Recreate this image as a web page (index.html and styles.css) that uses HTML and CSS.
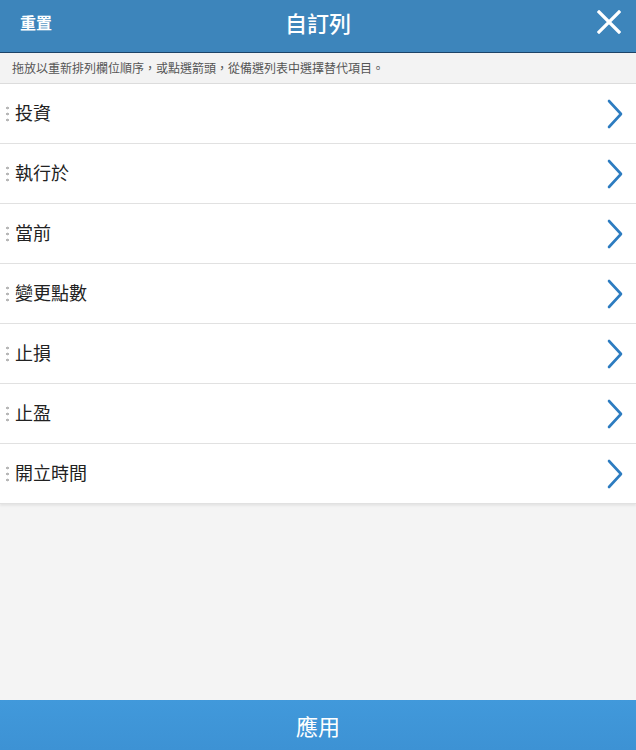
FILE: index.html
```html
<!DOCTYPE html>
<html lang="zh-Hant">
<head>
<meta charset="utf-8">
<title>自訂列</title>
<link rel="stylesheet" href="styles.css">
</head>
<body>
<div class="app">
  <header class="topbar">
    <span class="reset">重置</span>
    <h1 class="title">自訂列</h1>
    <svg class="close" width="24" height="24" viewBox="0 0 24 24" aria-label="關閉">
      <path d="M2 2 L22 22 M22 2 L2 22" stroke="#fff" stroke-width="3.2" stroke-linecap="square" fill="none"/>
    </svg>
  </header>
  <div class="hint">拖放以重新排列欄位順序，或點選箭頭，從備選列表中選擇替代項目。</div>
  <ul class="list">
    <li class="row"><span class="grip"></span><span class="label">投資</span><svg class="chev" viewBox="0 0 18 30"><path d="M3 2 L15 15 L3 28" /></svg></li>
    <li class="row"><span class="grip"></span><span class="label">執行於</span><svg class="chev" viewBox="0 0 18 30"><path d="M3 2 L15 15 L3 28" /></svg></li>
    <li class="row"><span class="grip"></span><span class="label">當前</span><svg class="chev" viewBox="0 0 18 30"><path d="M3 2 L15 15 L3 28" /></svg></li>
    <li class="row"><span class="grip"></span><span class="label">變更點數</span><svg class="chev" viewBox="0 0 18 30"><path d="M3 2 L15 15 L3 28" /></svg></li>
    <li class="row"><span class="grip"></span><span class="label">止損</span><svg class="chev" viewBox="0 0 18 30"><path d="M3 2 L15 15 L3 28" /></svg></li>
    <li class="row"><span class="grip"></span><span class="label">止盈</span><svg class="chev" viewBox="0 0 18 30"><path d="M3 2 L15 15 L3 28" /></svg></li>
    <li class="row"><span class="grip"></span><span class="label">開立時間</span><svg class="chev" viewBox="0 0 18 30"><path d="M3 2 L15 15 L3 28" /></svg></li>
  </ul>
  <div class="spacer"></div>
  <footer class="apply">應用</footer>
</div>
</body>
</html>
```
FILE: styles.css
```css
* { box-sizing: border-box; }
html, body { margin: 0; padding: 0; height: 100%; }
body {
  font-family: "Noto Sans CJK TC", "Noto Sans", sans-serif;
  background: #f4f4f4;
  color: #222;
}
.app {
  display: flex;
  flex-direction: column;
  height: 750px;
}
.topbar {
  height: 53px;
  background: #3d85bb;
  border-bottom: 1px solid #1d4468;
  display: flex;
  align-items: center;
  justify-content: space-between;
  padding: 0 14px 8px 20px;
  color: #fff;
  flex-shrink: 0;
}
.reset {
  font-size: 16px;
  font-weight: 700;
  width: 80px;
  line-height: 1;
}
.title {
  margin: 0;
  font-size: 22px;
  font-weight: 500;
  line-height: 1;
  flex: 1;
  text-align: center;
  padding-right: 5px;
}
.close {
  width: 24px;
  margin-left: 56px;
  margin-right: 1px;
  display: block;
}
.hint {
  height: 31px;
  background: #f3f3f3;
  border-bottom: 1px solid #dcdcdc;
  font-size: 12px;
  color: #555;
  padding: 0 0 1px 12px;
  display: flex;
  align-items: center;
  flex-shrink: 0;
}
.list {
  list-style: none;
  margin: 0;
  padding: 0;
  background: #fff;
  box-shadow: 0 2px 2px rgba(0,0,0,0.06);
  flex-shrink: 0;
}
.row {
  height: 60px;
  border-bottom: 1px solid #e1e1e1;
  display: flex;
  align-items: center;
  padding: 0 12px 0 6px;
}
.grip {
  width: 3px;
  height: 18px;
  margin-right: 6px;
  margin-top: 0;
  background-image: radial-gradient(circle, #b8b8b8 1.3px, transparent 1.6px);
  background-size: 3px 6px;
  background-repeat: repeat-y;
}
.label {
  font-size: 18px;
  flex: 1;
  color: #222;
  line-height: 1;
  padding-bottom: 3px;
}
.chev {
  width: 18px;
  height: 30px;
  fill: none;
  stroke: #2d7cc0;
  stroke-width: 2.6;
  stroke-linecap: round;
  stroke-linejoin: round;
}
.spacer { flex: 1; }
.apply {
  height: 50px;
  background: linear-gradient(#4199db, #3d92d4);
  color: #fff;
  font-size: 22px;
  display: flex;
  align-items: center;
  justify-content: center;
  flex-shrink: 0;
}
```
